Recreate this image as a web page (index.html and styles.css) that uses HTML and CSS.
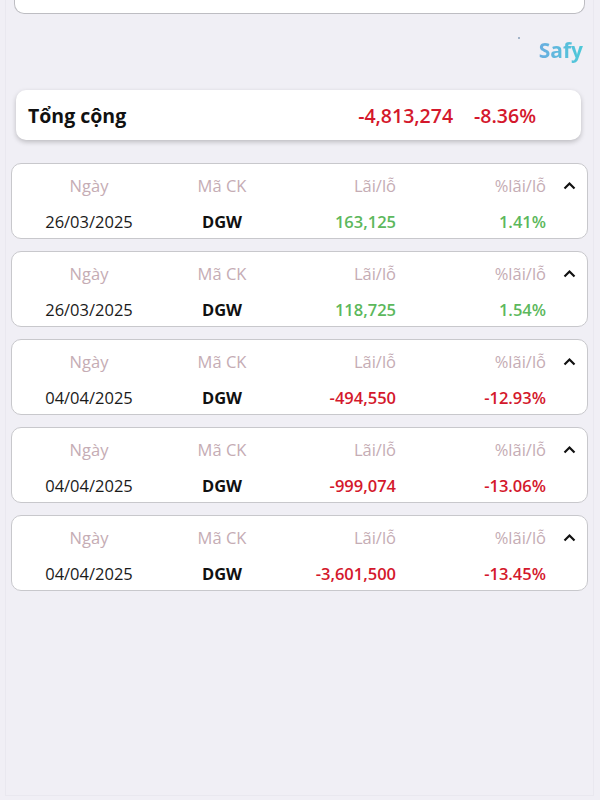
FILE: index.html
```html
<!DOCTYPE html>
<html lang="vi">
<head>
    <meta charset="UTF-8">
    <meta name="viewport" content="width=device-width, initial-scale=1.0">
    <title>Lãi/lỗ</title>
    <link rel="stylesheet" href="styles.css">
</head>
<body>
    <div class="screen">
        <div class="top-card"></div>

        <div class="brand-row">
            <span class="dot"></span>
            <span class="brand">Safy</span>
        </div>

        <div class="total-card">
            <span class="total-label">Tổng cộng</span>
            <span class="total-value red">-4,813,274</span>
            <span class="total-pct red">-8.36%</span>
        </div>

        <div class="list">
            <div class="trade">
                <span class="head">Ngày</span>
                <span class="head">Mã CK</span>
                <span class="head num">Lãi/lỗ</span>
                <span class="head num">%lãi/lỗ</span>
                <span class="chevron"><svg width="13" height="9" viewBox="0 0 13 9"><path d="M1.5 7.5 L6.5 2.5 L11.5 7.5" fill="none" stroke="#111" stroke-width="2.2"/></svg></span>
                <span class="cell">26/03/2025</span>
                <span class="cell code">DGW</span>
                <span class="cell num val green">163,125</span>
                <span class="cell num val green">1.41%</span>
            </div>
            <div class="trade">
                <span class="head">Ngày</span>
                <span class="head">Mã CK</span>
                <span class="head num">Lãi/lỗ</span>
                <span class="head num">%lãi/lỗ</span>
                <span class="chevron"><svg width="13" height="9" viewBox="0 0 13 9"><path d="M1.5 7.5 L6.5 2.5 L11.5 7.5" fill="none" stroke="#111" stroke-width="2.2"/></svg></span>
                <span class="cell">26/03/2025</span>
                <span class="cell code">DGW</span>
                <span class="cell num val green">118,725</span>
                <span class="cell num val green">1.54%</span>
            </div>
            <div class="trade">
                <span class="head">Ngày</span>
                <span class="head">Mã CK</span>
                <span class="head num">Lãi/lỗ</span>
                <span class="head num">%lãi/lỗ</span>
                <span class="chevron"><svg width="13" height="9" viewBox="0 0 13 9"><path d="M1.5 7.5 L6.5 2.5 L11.5 7.5" fill="none" stroke="#111" stroke-width="2.2"/></svg></span>
                <span class="cell">04/04/2025</span>
                <span class="cell code">DGW</span>
                <span class="cell num val red">-494,550</span>
                <span class="cell num val red">-12.93%</span>
            </div>
            <div class="trade">
                <span class="head">Ngày</span>
                <span class="head">Mã CK</span>
                <span class="head num">Lãi/lỗ</span>
                <span class="head num">%lãi/lỗ</span>
                <span class="chevron"><svg width="13" height="9" viewBox="0 0 13 9"><path d="M1.5 7.5 L6.5 2.5 L11.5 7.5" fill="none" stroke="#111" stroke-width="2.2"/></svg></span>
                <span class="cell">04/04/2025</span>
                <span class="cell code">DGW</span>
                <span class="cell num val red">-999,074</span>
                <span class="cell num val red">-13.06%</span>
            </div>
            <div class="trade">
                <span class="head">Ngày</span>
                <span class="head">Mã CK</span>
                <span class="head num">Lãi/lỗ</span>
                <span class="head num">%lãi/lỗ</span>
                <span class="chevron"><svg width="13" height="9" viewBox="0 0 13 9"><path d="M1.5 7.5 L6.5 2.5 L11.5 7.5" fill="none" stroke="#111" stroke-width="2.2"/></svg></span>
                <span class="cell">04/04/2025</span>
                <span class="cell code">DGW</span>
                <span class="cell num val red">-3,601,500</span>
                <span class="cell num val red">-13.45%</span>
            </div>
        </div>
    </div>
</body>
</html>
```

FILE: styles.css
```css
body {
    margin: 0;
    font-family: "Open Sans", "Noto Sans", sans-serif;
    background-color: #f0eff5;
}
.screen {
    height: 796px;
    margin: 0 6px 0 5px;
    border-left: 1px solid #e9e8ef;
    border-right: 1px solid #e9e8ef;
    border-bottom: 1px solid #e9e8ef;
    box-sizing: border-box;
}
.top-card {
    height: 13px;
    margin: 0 8px 0 8px;
    background: #fff;
    border: 1px solid #bdbdc2;
    border-top: none;
    border-radius: 0 0 10px 10px;
}
.brand-row {
    display: flex;
    justify-content: flex-end;
    align-items: flex-start;
    height: 76px;
    padding-right: 10px;
    padding-top: 22px;
    box-sizing: border-box;
}
.dot {
    width: 2px;
    height: 2px;
    background: #8aa0b8;
    border-radius: 50%;
    margin-top: 1px;
    margin-right: 19px;
}
.brand {
    font-size: 21px;
    font-weight: 700;
    line-height: 28px;
    background: linear-gradient(90deg, #6aaee0, #4ec9d8);
    -webkit-background-clip: text;
    color: transparent;
}
.total-card {
    display: flex;
    align-items: center;
    height: 50px;
    margin: 0 12px 0 10px;
    padding: 0 45px 0 12px;
    background: #fff;
    border-radius: 10px;
    box-shadow: 0 2px 5px rgba(0, 0, 0, 0.22);
}
.total-label {
    font-size: 19.5px;
    font-weight: 700;
    color: #111;
    flex: 1;
}
.total-value {
    font-size: 19.5px;
    font-weight: 600;
}
.total-pct {
    font-size: 19.5px;
    font-weight: 600;
    margin-left: 21px;
}
.red {
    color: #d4182c;
}
.green {
    color: #5cb85c;
}
.list {
    display: flex;
    flex-direction: column;
    gap: 12px;
    margin: 23px 5px 0 5px;
}
.trade {
    display: grid;
    grid-template-columns: 154px 112px 118px 150px 1fr;
    grid-template-rows: 42px 1fr;
    align-items: center;
    height: 76px;
    box-sizing: border-box;
    background: #fff;
    border: 1px solid #c8c8cc;
    border-radius: 10px;
    font-size: 16.5px;
}
.head {
    grid-row: 1;
    color: #c5acb4;
    text-align: center;
}
.cell {
    grid-row: 2;
    color: #1a1a1a;
    text-align: center;
    padding-bottom: 2px;
}
.num {
    text-align: right;
}
.code {
    font-weight: 700;
    color: #111;
}
.val {
    font-weight: 600;
}
.cell.green {
    color: #5cb85c;
}
.cell.red {
    color: #d4182c;
}
.chevron {
    grid-row: 1;
    grid-column: 5;
    text-align: center;
    line-height: 0;
    padding-left: 6px;
}
```
